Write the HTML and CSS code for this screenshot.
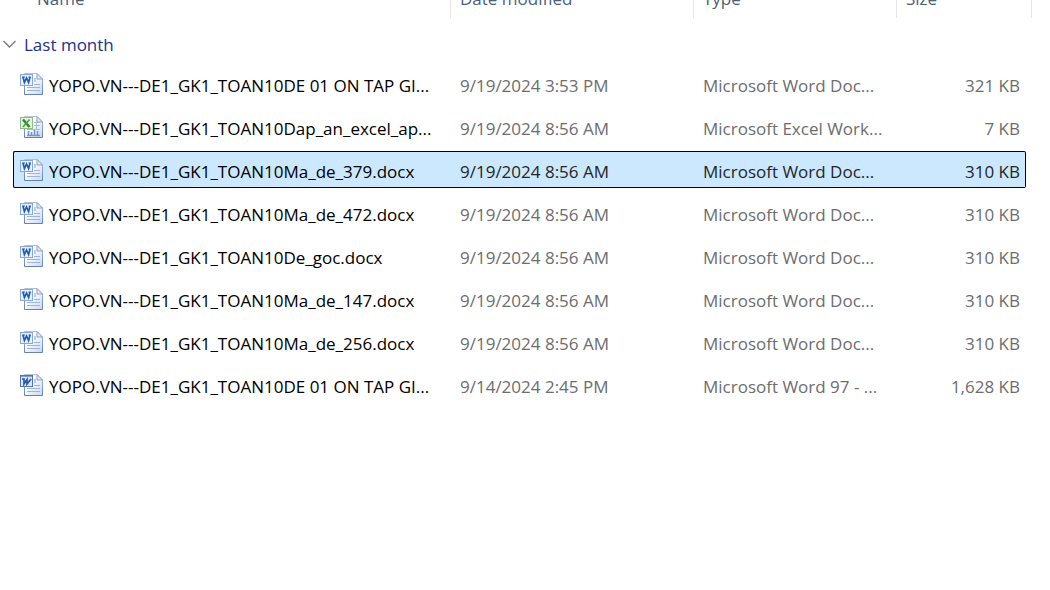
FILE: index.html
```
<!DOCTYPE html>
<html lang="en">
<head>
<meta charset="utf-8">
<title>Files</title>
<link rel="stylesheet" href="styles.css">
</head>
<body>
<svg class="defs" aria-hidden="true">
  <defs>
    <linearGradient id="paper" x1="0" y1="0" x2="1" y2="1"><stop offset="0.4" stop-color="#fbfcff"/><stop offset="1" stop-color="#c5d6f2"/></linearGradient>
    <linearGradient id="edge" x1="0" y1="0" x2="0" y2="1"><stop offset="0" stop-color="#b3c1d8"/><stop offset="1" stop-color="#6482b3"/></linearGradient>
    <symbol id="page" viewBox="0 0 24 24">
      <path d="M4.5 1.5h12.5l5.5 5.5v15.5h-18z" fill="url(#paper)" stroke="url(#edge)"/>
      <path d="M17 1.5v5.5h5.5z" fill="#e3ebf8" stroke="#8ea2c3"/>
    </symbol>
    <symbol id="lines" viewBox="0 0 24 24">
      <path d="M14 6h2v4h-2z" fill="#b9cdec"/>
      <path d="M14 12.5h6M7 15.5h13M7 18.5h13" stroke="#9db5dd" fill="none"/>
    </symbol>
    <symbol id="docx" viewBox="0 0 24 24">
      <use href="#page"/><use href="#lines"/>
      <rect x="0.5" y="2.5" width="12" height="11" fill="#e9f2fd" stroke="#88a9d8"/>
      <path d="M3 5l1.4 5.5L6.5 6l2.1 4.5L10 5" fill="none" stroke="#1f5bb5" stroke-width="1.7"/>
      <path d="M2 5h3M8.500 5h2.500" stroke="#1f5bb5"/>
    </symbol>
    <symbol id="doc" viewBox="0 0 24 24">
      <use href="#page"/><use href="#lines"/>
      <rect x="0.5" y="2.5" width="12" height="11" fill="#dfe9fb" stroke="#4c75bd"/>
      <path d="M1 3.5h11" stroke="#7ba0e0"/>
      <path d="M2 6h2l0 5L7 6.5l0 4.5L11 6" fill="none" stroke="#2c55a8" stroke-width="1.7"/>
    </symbol>
    <symbol id="xlsx" viewBox="0 0 24 24">
      <use href="#page"/>
      <path d="M14 7.5h6M14 10.5h6M7 14.5h13M16.5 5v9" stroke="#a9bbdc" fill="none"/>
      <path d="M8.5 20v-4M11.5 20v-3M14.5 20v-5M17.5 20v-4M7 20.5h13" stroke="#7695c4" stroke-width="1.5" fill="none"/>
      <rect x="0.5" y="2.5" width="12" height="11" fill="#e6f4df" stroke="#8fbf83"/>
      <path d="M3 4.5l6.5 7.5" stroke="#2b8a2e" stroke-width="2.6"/>
      <path d="M9.5 4.500L3 12" stroke="#4da545" stroke-width="1.8"/>
    </symbol>
  </defs>
</svg>
<main class="listing">
<table class="files">
  <colgroup><col class="col-gutter"><col class="col-name"><col class="col-date"><col class="col-type"><col class="col-size"><col class="col-end"></colgroup>
  <thead>
    <tr class="head">
      <th class="head-name" colspan="2" scope="col">Name</th>
      <th scope="col">Date modified</th>
      <th scope="col">Type</th>
      <th colspan="2" scope="col">Size</th>
    </tr>
  </thead>
  <tbody>
    <tr class="group"><th colspan="6" scope="rowgroup"><button class="toggle" type="button" aria-expanded="true"><svg class="chevron" viewBox="0 0 14 14" aria-hidden="true"><path d="M0.5 3l6 6 6-6"/></svg>Last month</button></th></tr>
    <tr class="file"><td></td><td class="name"><span class="label"><svg class="icon" aria-hidden="true"><use href="#docx"/></svg>YOPO.VN---DE1_GK1_TOAN10DE 01 ON TAP GI...</span></td><td>9/19/2024 3:53 PM</td><td>Microsoft Word Doc...</td><td class="size">321 KB</td><td></td></tr>
    <tr class="file"><td></td><td class="name"><span class="label"><svg class="icon" aria-hidden="true"><use href="#xlsx"/></svg>YOPO.VN---DE1_GK1_TOAN10Dap_an_excel_ap...</span></td><td>9/19/2024 8:56 AM</td><td>Microsoft Excel Work...</td><td class="size">7 KB</td><td></td></tr>
    <tr class="file selected" aria-selected="true"><td></td><td class="name"><span class="label"><svg class="icon" aria-hidden="true"><use href="#docx"/></svg>YOPO.VN---DE1_GK1_TOAN10Ma_de_379.docx</span></td><td>9/19/2024 8:56 AM</td><td>Microsoft Word Doc...</td><td class="size">310 KB</td><td></td></tr>
    <tr class="file"><td></td><td class="name"><span class="label"><svg class="icon" aria-hidden="true"><use href="#docx"/></svg>YOPO.VN---DE1_GK1_TOAN10Ma_de_472.docx</span></td><td>9/19/2024 8:56 AM</td><td>Microsoft Word Doc...</td><td class="size">310 KB</td><td></td></tr>
    <tr class="file"><td></td><td class="name"><span class="label"><svg class="icon" aria-hidden="true"><use href="#docx"/></svg>YOPO.VN---DE1_GK1_TOAN10De_goc.docx</span></td><td>9/19/2024 8:56 AM</td><td>Microsoft Word Doc...</td><td class="size">310 KB</td><td></td></tr>
    <tr class="file"><td></td><td class="name"><span class="label"><svg class="icon" aria-hidden="true"><use href="#docx"/></svg>YOPO.VN---DE1_GK1_TOAN10Ma_de_147.docx</span></td><td>9/19/2024 8:56 AM</td><td>Microsoft Word Doc...</td><td class="size">310 KB</td><td></td></tr>
    <tr class="file"><td></td><td class="name"><span class="label"><svg class="icon" aria-hidden="true"><use href="#docx"/></svg>YOPO.VN---DE1_GK1_TOAN10Ma_de_256.docx</span></td><td>9/19/2024 8:56 AM</td><td>Microsoft Word Doc...</td><td class="size">310 KB</td><td></td></tr>
    <tr class="file"><td></td><td class="name"><span class="label"><svg class="icon" aria-hidden="true"><use href="#doc"/></svg>YOPO.VN---DE1_GK1_TOAN10DE 01 ON TAP GI...</span></td><td>9/14/2024 2:45 PM</td><td>Microsoft Word 97 - ...</td><td class="size">1,628 KB</td><td></td></tr>
  </tbody>
</table>
</main>
</body>
</html>
```
FILE: styles.css
```
* { box-sizing: border-box; }
body {
  margin: 0;
  background: #fff;
  font-family: "Open Sans", "Noto Sans", sans-serif;
  font-size: 17px;
  line-height: 24px;
  color: #6d6d6d;
}
.defs { position: absolute; width: 0; height: 0; }
/* The list is scrolled so that the header is partly above the top edge. */
.listing { height: 100vh; overflow: hidden; padding-right: 18px; }
.files {
  width: 100%;
  margin-top: -25px;
  table-layout: fixed;
  border-collapse: separate;
  border-spacing: 0 6px;
}
.col-gutter { width: 13px; }
.col-date { width: 243px; }
.col-type { width: 203px; }
.col-size { width: 129px; }
.col-end { width: 6px; }
th, td { padding: 0 0 0 9px; text-align: left; font-weight: 400; white-space: nowrap; }
.head th { height: 37px; padding-bottom: 2px; border-right: 1px solid #e5e5e5; color: #4c607a; }
.head .head-name { padding-left: 37px; }
.group th { height: 35px; padding: 6px 0 0 3px; }
.toggle {
  display: flex;
  align-items: center;
  gap: 7px;
  padding: 0;
  border: 0;
  background: none;
  font: inherit;
  color: #1e3287;
}
.chevron { width: 14px; height: 14px; fill: none; stroke: #777; stroke-width: 1.3; }
.file td { height: 37px; padding-top: 4px; }
.file td:first-child, .file td:last-child { padding: 0; }
.file .name { padding-left: 7px; color: #000; }
.label { display: flex; align-items: center; gap: 5px; }
.icon { flex: none; width: 24px; height: 24px; margin-bottom: 4px; }
.file .size { padding-left: 0; padding-right: 6px; text-align: right; }
.selected td { color: #252525; }
.selected td:not(:first-child):not(:last-child) {
  background: #cce8ff;
  border-top: 1px solid #000;
  border-bottom: 1px solid #000;
}
.selected .name.name { border-left: 1px solid #000; border-radius: 2px 0 0 2px; padding-left: 6px; }
.selected .size.size { border-right: 1px solid #000; border-radius: 0 2px 2px 0; padding-right: 5px; }
```
